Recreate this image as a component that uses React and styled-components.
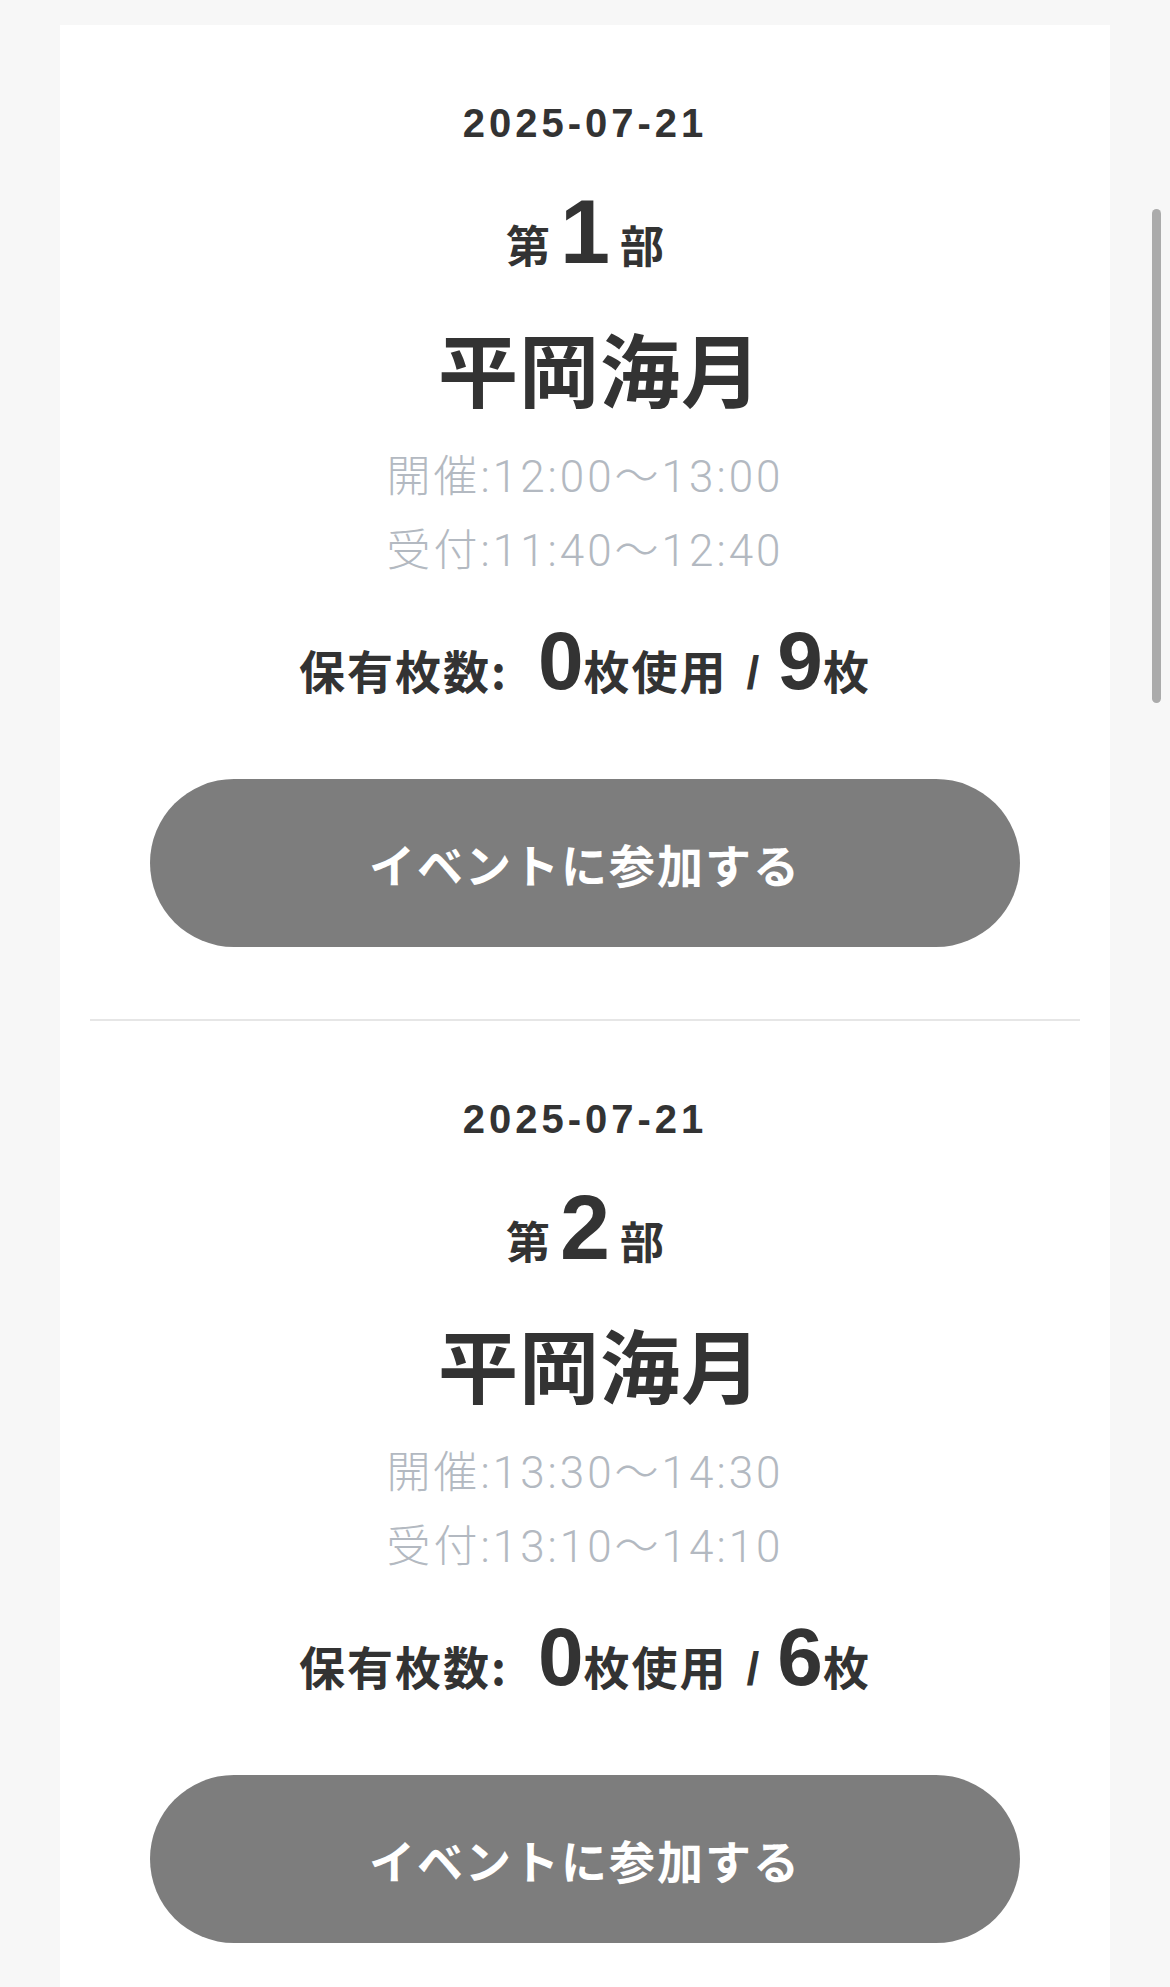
import React from 'react'
import styled, { createGlobalStyle } from 'styled-components'

const GlobalStyle = createGlobalStyle`
	html, body {
		margin: 0;
		padding: 0;
		background: #f7f7f7;
	}
	body {
		font-family: "Liberation Sans", "Noto Sans CJK JP", sans-serif;
		color: #333;
	}
`

const Page = styled.div`
	padding: 25px 60px 0;
	min-height: 1962px;
`

const Card = styled.div`
	background: #fff;
	padding: 0 30px;
	min-height: 1962px;
`

const Section = styled.section`
	display: flex;
	flex-direction: column;
	align-items: center;
	padding: 74px 0 72px;
	border-bottom: ${props => (props.last ? 'none' : '2px solid #e6e6e6')};
`

const DateText = styled.div`
	font-size: 40px;
	line-height: 48px;
	font-weight: 700;
	letter-spacing: 4px;
`

const PartRow = styled.div`
	display: flex;
	align-items: baseline;
	margin-top: 40px;
	line-height: 1;
	font-weight: 700;
`

const PartLabel = styled.span`
	font-family: "Noto Sans CJK JP", sans-serif;
	font-size: 44px;
`

const PartNumber = styled.span`
	font-family: "Liberation Sans", sans-serif;
	font-size: 90px;
	margin: 0 10px 0 10px;
`

const Name = styled.h2`
	margin: 49px 0 0;
	padding-left: 30px;
	font-family: "Noto Sans CJK JP", sans-serif;
	font-size: 80px;
	line-height: 1;
	font-weight: 700;
	letter-spacing: 1px;
`

const Times = styled.div`
	margin-top: 34px;
	display: flex;
	flex-direction: column;
	align-items: center;
`

const TimeLine = styled.div`
	font-family: Roboto, "Noto Sans CJK JP", sans-serif;
	font-size: 44px;
	line-height: 74px;
	font-weight: 300;
	letter-spacing: 3px;
	color: #b3b9c1;
`

const CountRow = styled.div`
	display: flex;
	align-items: baseline;
	margin-top: 32px;
	line-height: 1;
	font-weight: 700;
`

const CountLabel = styled.span`
	font-family: "Noto Sans CJK JP", sans-serif;
	font-size: 46px;
	letter-spacing: 2px;
`

const Slash = styled.span`
	font-family: "Liberation Sans", sans-serif;
	font-size: 46px;
	margin-left: 19px;
`

const CountNumber = styled.span`
	font-family: "Liberation Sans", sans-serif;
	font-size: 82px;
	margin-left: ${props => props.gap}px;
`

const JoinButton = styled.button`
	margin-top: 77px;
	width: 870px;
	height: 168px;
	border: none;
	border-radius: 999px;
	background: #7d7d7d;
	color: #fff;
	font-family: "Noto Sans CJK JP", sans-serif;
	font-size: 46px;
	font-weight: 700;
	letter-spacing: 2px;
	cursor: pointer;
`

const ScrollThumb = styled.div`
	position: fixed;
	left: 1152px;
	top: 209px;
	width: 9px;
	height: 494px;
	border-radius: 5px;
	background: #ababab;
`

const events = [
	{
		date: '2025-07-21',
		part: 1,
		name: '平岡海月',
		open: '12:00〜13:00',
		reception: '11:40〜12:40',
		used: 0,
		total: 9
	},
	{
		date: '2025-07-21',
		part: 2,
		name: '平岡海月',
		open: '13:30〜14:30',
		reception: '13:10〜14:10',
		used: 0,
		total: 6
	}
]

const EventSection = ({ event, last }) => (
	<Section last={last}>
		<DateText>{event.date}</DateText>
		<PartRow>
			<PartLabel>第</PartLabel>
			<PartNumber>{event.part}</PartNumber>
			<PartLabel>部</PartLabel>
		</PartRow>
		<Name>{event.name}</Name>
		<Times>
			<TimeLine>開催:{event.open}</TimeLine>
			<TimeLine>受付:{event.reception}</TimeLine>
		</Times>
		<CountRow>
			<CountLabel>保有枚数:</CountLabel>
			<CountNumber gap={30}>{event.used}</CountNumber>
			<CountLabel>枚使用</CountLabel>
			<Slash>/</Slash>
			<CountNumber gap={18}>{event.total}</CountNumber>
			<CountLabel>枚</CountLabel>
		</CountRow>
		<JoinButton>イベントに参加する</JoinButton>
	</Section>
)

export default function App() {
	return (
		<>
			<GlobalStyle />
			<Page>
				<Card>
					{events.map((event, i) => (
						<EventSection key={event.part} event={event} last={i === events.length - 1} />
					))}
				</Card>
			</Page>
			<ScrollThumb />
		</>
	)
}
